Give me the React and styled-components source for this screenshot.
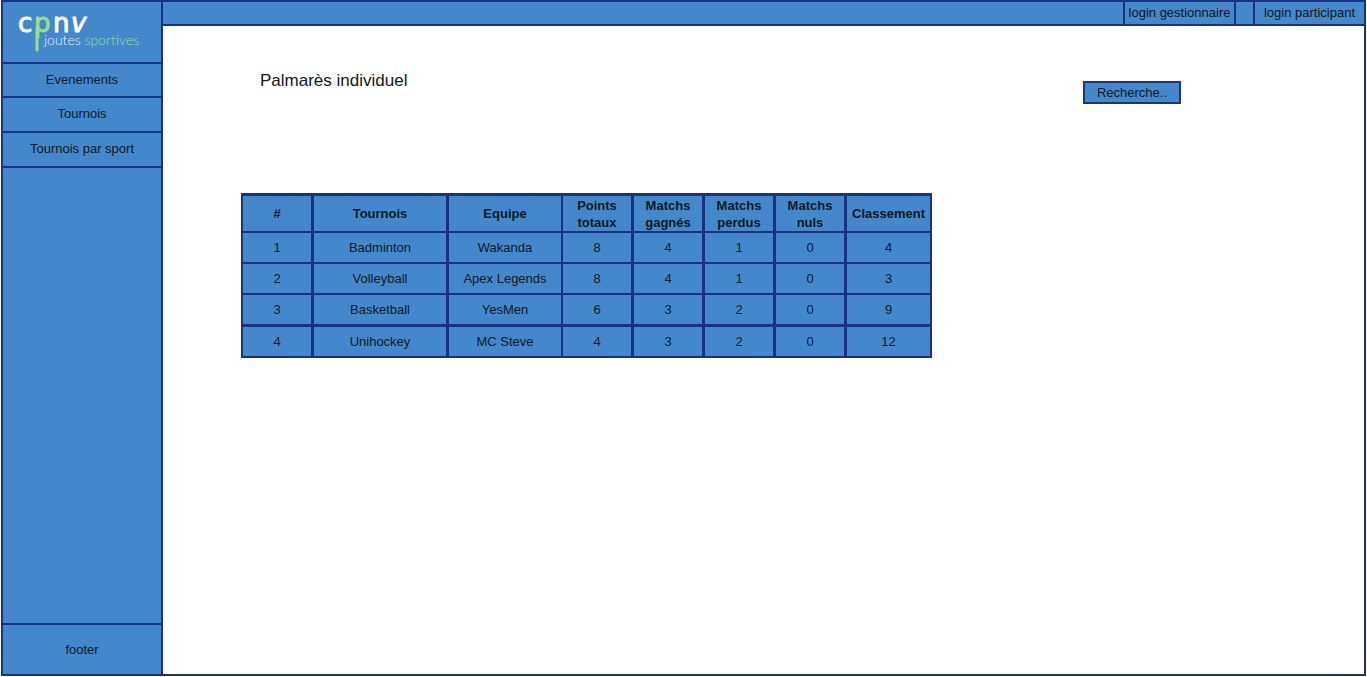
import React from "react";
import styled, { createGlobalStyle, css } from "styled-components";

const FILL = "#4488cc";
const LINE = "#1b3282";

const GlobalStyle = createGlobalStyle`
  * { box-sizing: border-box; }
  body {
    margin: 0;
    background: #fff;
    color: #111820;
    font: 13px/18px "Liberation Sans", Arial, sans-serif;
  }
`;

const Page = styled.div`
  display: grid;
  grid-template-columns: 162px minmax(0, 1fr);
  min-height: calc(100vh - 1px);
  margin: 0 1px 1px;
  border: 2px solid ${LINE};
  border-top-width: 1px;
  border-left-width: 0;
`;

const Sidebar = styled.aside`
  display: flex;
  flex-direction: column;
  border: 2px solid ${LINE};
  border-bottom: 0;
  border-top-width: 1px;
  background: ${FILL};
`;

const Brand = styled.a`
  display: block;
  height: 62px;
  border-bottom: 2px solid ${LINE};

  svg { display: block; }
`;

const Nav = styled.nav`
  display: flex;
  flex-direction: column;
  flex: 1;
`;

const NavLink = styled.a`
  display: block;
  padding: 7px 0 8px;
  border-bottom: 2px solid ${LINE};
  color: inherit;
  text-align: center;
  text-decoration: none;

  &:first-child { padding-bottom: 7px; }
`;

const Footer = styled.footer`
  padding: 16px 0 15px;
  border-top: 2px solid ${LINE};
  text-align: center;
`;

const Content = styled.div`
  min-width: 0;
`;

const TopBar = styled.header`
  display: flex;
  justify-content: flex-end;
  gap: 17px;
  height: 25px;
  border-top: 1px solid ${LINE};
  border-bottom: 2px solid ${LINE};
  background: ${FILL};
`;

const LoginButton = styled.button`
  width: ${(p) => (p.$last ? 111 : 113)}px;
  height: 24px;
  padding: 0;
  border: 2px solid ${LINE};
  border-top-width: 0;
  border-right-width: ${(p) => (p.$last ? 0 : 2)}px;
  background: ${FILL};
  color: inherit;
  font: inherit;
`;

const Main = styled.main`
  padding: 45px 183px 40px 78px;
`;

const TitleRow = styled.div`
  display: flex;
  justify-content: space-between;
  align-items: flex-start;
  margin-bottom: 89px;
  padding-left: 19px;
`;

const Title = styled.h1`
  margin: 0;
  font-size: 17px;
  font-weight: 400;
  line-height: 20px;
`;

const Search = styled.input`
  width: 98px;
  height: 23px;
  margin-top: 10px;
  padding: 0;
  border: 2px solid ${LINE};
  border-radius: 0;
  background: ${FILL};
  color: inherit;
  font: inherit;
  text-align: center;

  &::placeholder { color: inherit; opacity: 1; }
`;

const Table = styled.table`
  width: 691px;
  table-layout: fixed;
  border-collapse: separate;
  border-spacing: 0;
  border-top: 2px solid ${LINE};
  border-left: 2px solid ${LINE};
  background: ${FILL};
`;

const Column = styled.col`
  width: ${(p) => p.$width}px;
`;

const cell = css`
  padding: 0;
  border: 0 solid ${LINE};
  border-right-width: ${(p) => (p.$thin ? 2 : 3)}px;
  text-align: center;
  vertical-align: middle;
`;

const HeadCell = styled.th`
  ${cell}
  height: 38px;
  padding-top: 1px;
  border-bottom-width: 2px;
  box-shadow: inset 0 1px ${LINE};
  line-height: 17px;
`;

const DataCell = styled.td`
  ${cell}
  height: ${(p) => (p.$heavy ? 32 : 31)}px;
  border-bottom-width: ${(p) => (p.$heavy ? 3 : 2)}px;
`;

const columns = [
  { label: "#", width: 71 },
  { label: "Tournois", width: 135 },
  { label: "Equipe", width: 114, thin: true },
  { label: "Points totaux", width: 71 },
  { label: "Matchs gagnés", width: 71 },
  { label: "Matchs perdus", width: 71 },
  { label: "Matchs nuls", width: 71 },
  { label: "Classement", width: 85, thin: true },
];

const rows = [
  [1, "Badminton", "Wakanda", 8, 4, 1, 0, 4],
  [2, "Volleyball", "Apex Legends", 8, 4, 1, 0, 3],
  [3, "Basketball", "YesMen", 6, 3, 2, 0, 9],
  [4, "Unihockey", "MC Steve", 4, 3, 2, 0, 12],
];

const Wordmark = styled.g`
  font: 26px "DejaVu Sans", sans-serif;
  fill: #fff;
  stroke: #fff;
  stroke-width: 1px;
  stroke-linejoin: round;
`;

const GreenLetter = styled.text`
  fill: #99dd88;
  stroke: #99dd88;
`;

const SlantedLetter = styled.text`
  font-style: italic;
`;

const Tagline = styled.text`
  font: 300 14px Lato, sans-serif;
  fill: #e4effa;

  tspan { fill: #96dfa0; }
`;

function Logo() {
  return (
    <svg width="158" height="60" viewBox="3 2 158 60" role="img" aria-label="cpnv joutes sportives">
      <Wordmark>
        <text x="18" y="32">c</text>
        <text x="53" y="32">n</text>
        <SlantedLetter x="71" y="32">v</SlantedLetter>
        <GreenLetter x="34" y="32">p</GreenLetter>
      </Wordmark>
      <path d="M37 28V50" fill="none" stroke="#99dd88" strokeWidth="3" strokeLinecap="round" />
      <Tagline x="44" y="45">
        joutes <tspan>sportives</tspan>
      </Tagline>
    </svg>
  );
}

export default function App() {
  return (
    <>
      <GlobalStyle />
      <Page>
        <Sidebar>
          <Brand href="#">
            <Logo />
          </Brand>
          <Nav>
            <NavLink href="#evenements">Evenements</NavLink>
            <NavLink href="#tournois">Tournois</NavLink>
            <NavLink href="#sports">Tournois par sport</NavLink>
          </Nav>
          <Footer>footer</Footer>
        </Sidebar>
        <Content>
          <TopBar>
            <LoginButton type="button">login gestionnaire</LoginButton>
            <LoginButton type="button" $last>login participant</LoginButton>
          </TopBar>
          <Main>
            <TitleRow>
              <Title>Palmarès individuel</Title>
              <Search type="text" placeholder="Recherche.." aria-label="Recherche" />
            </TitleRow>
            <Table>
              <colgroup>
                {columns.map((c) => (
                  <Column key={c.label} $width={c.width} />
                ))}
              </colgroup>
              <thead>
                <tr>
                  {columns.map((c) => (
                    <HeadCell key={c.label} scope="col" $thin={c.thin}>{c.label}</HeadCell>
                  ))}
                </tr>
              </thead>
              <tbody>
                {rows.map((row, r) => (
                  <tr key={row[0]}>
                    {row.map((value, i) => (
                      <DataCell key={columns[i].label} $thin={columns[i].thin} $heavy={r === 2}>
                        {value}
                      </DataCell>
                    ))}
                  </tr>
                ))}
              </tbody>
            </Table>
          </Main>
        </Content>
      </Page>
    </>
  );
}
